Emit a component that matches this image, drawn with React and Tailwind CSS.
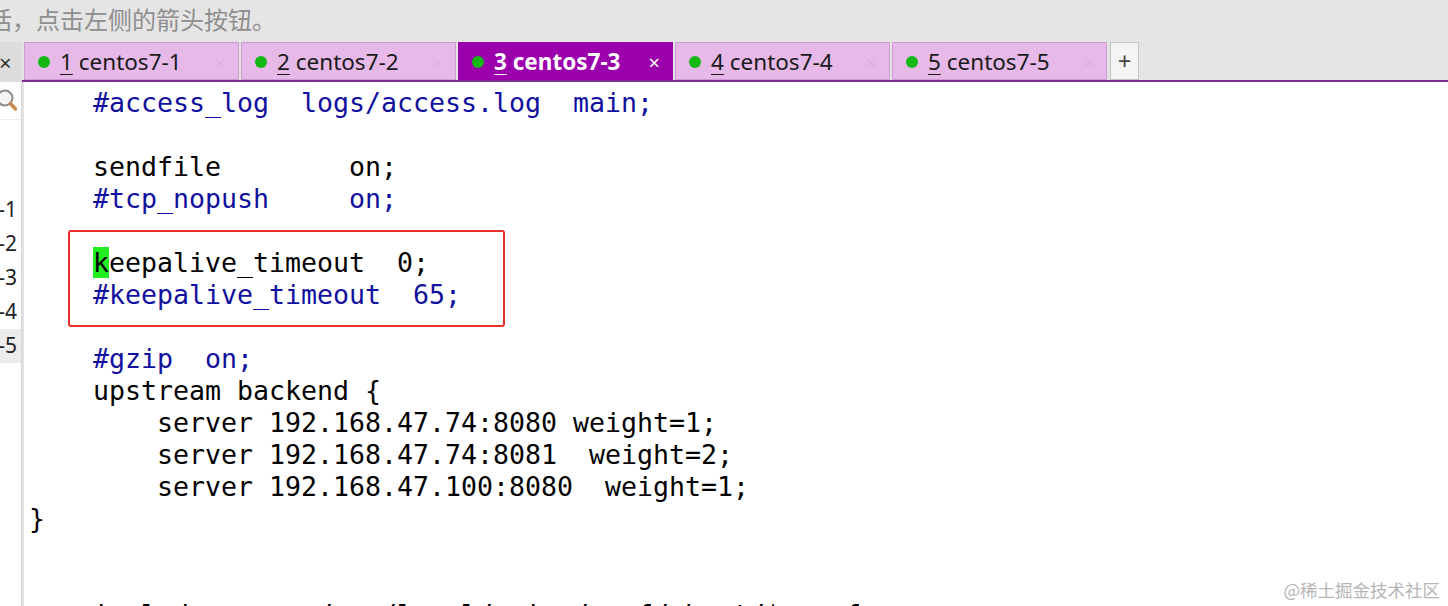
import React from 'react';

const tabs = [
  { n: '1', name: 'centos7-1' },
  { n: '2', name: 'centos7-2' },
  { n: '3', name: 'centos7-3', active: true },
  { n: '4', name: 'centos7-4' },
  { n: '5', name: 'centos7-5' },
];

const B = 'text-[#10109e]';
const K = 'text-black';

// each line: list of [text, colorClass, cursor]
const lines = [
  [['    #access_log  logs/access.log  main;', B]],
  [],
  [['    sendfile        on;', K]],
  [['    #tcp_nopush     on;', B]],
  [],
  [['    ', K], ['k', K, true], ['eepalive_timeout  0;', K]],
  [['    #keepalive_timeout  65;', B]],
  [],
  [['    #gzip  on;', B]],
  [['    upstream backend {', K]],
  [['        server 192.168.47.74:8080 weight=1;', K]],
  [['        server 192.168.47.74:8081  weight=2;', K]],
  [['        server 192.168.47.100:8080  weight=1;', K]],
  [['}', K]],
  [],
  [],
  [['    include       /usr/local/nginx/conf/vhost/*.conf;', K]],
];

const Tab = ({ n, name, active }) => (
  <div
    className={`w-[215px] h-[38px] flex items-center pl-[13px] pr-[12px] pt-[3px] border ${
      active ? 'bg-[#9c00ad] border-[#9c00ad] text-white font-bold' : 'bg-[#e6b9e8] border-[#cf9ad3] text-[#1a1a1a]'
    }`}
  >
    <span className="w-[12px] h-[12px] rounded-full bg-[#14b814] shrink-0 mt-[-2px]" />
    <span className="ml-[10px] text-[22.5px] leading-none whitespace-nowrap">
      <span className="underline underline-offset-[4px] decoration-1">{n}</span> {name}
    </span>
    <span className={`ml-auto font-normal text-[20px] leading-none ${active ? 'text-white' : 'text-[#dcb2de]'}`}>×</span>
  </div>
);

const SideItem = ({ name, selected }) => (
  <div className={`h-[34px] flex items-center justify-end overflow-hidden pr-[4px] ${selected ? 'bg-[#ececec]' : ''}`}>
    <span className="whitespace-nowrap text-[21px] text-[#222]">{name}</span>
  </div>
);

export default function App() {
  return (
    <div
      className="w-[1448px] h-[606px] overflow-hidden bg-white flex flex-col relative"
      style={{ fontFamily: '"Noto Sans", "Noto Sans CJK SC", sans-serif' }}
    >
      {/* hint bar */}
      <div className="h-[42px] bg-[#e5e5e5] flex items-center overflow-hidden shrink-0">
        <span
          className="ml-[-12px] mt-[-4px] text-[24px] leading-none text-[#8e8e8e] whitespace-nowrap"
          style={{ fontFamily: '"Noto Sans CJK SC", sans-serif' }}
        >
          话，点击左侧的箭头按钮。
        </span>
      </div>

      <div className="flex flex-1 min-h-0">
        {/* session list, mostly hidden */}
        <div className="w-[22px] shrink-0 flex flex-col">
          <div className="h-[40px] bg-[#dcdcdc] flex items-center overflow-hidden">
            <span className="ml-[-1px] text-[22px] leading-none text-[#333]">×</span>
          </div>
          <div className="flex-1 border-r border-[#d6d6d6] flex flex-col">
            <div className="h-[38px] flex items-center overflow-hidden border-b border-[#ededed]">
              <svg width="22" height="26" viewBox="0 0 22 26" className="ml-[-5px]">
                <circle cx="10" cy="10" r="7.5" fill="#f4f4f4" stroke="#8a8a8a" strokeWidth="2" />
                <line x1="15.5" y1="15.5" x2="20.5" y2="21" stroke="#c98a4a" strokeWidth="3.5" strokeLinecap="round" />
              </svg>
            </div>
            <div className="h-[73px]" />
            {['centos7-1', 'centos7-2', 'centos7-3', 'centos7-4', 'centos7-5'].map((s, i) => (
              <SideItem key={s} name={s} selected={i === 4} />
            ))}
          </div>
        </div>

        <div className="flex-1 flex flex-col min-w-0">
          {/* tab strip */}
          <div className="h-[40px] bg-[#e4e4e4] border-b-2 border-[#7d2a8e] flex items-start gap-[2px] pl-[2px] shrink-0">
            {tabs.map((t) => (
              <Tab key={t.n} {...t} />
            ))}
            <div className="w-[29px] h-[38px] ml-[1px] bg-[#f4f4f4] border border-[#c4c4c4] flex items-center justify-center">
              <span className="text-[24px] leading-none text-[#444]">+</span>
            </div>
          </div>

          {/* terminal */}
          <div className="flex-1 relative border-l-2 border-[#e2e2e2] pt-[5px] pl-[5px]">
            <div
              className="text-[26.58px] leading-[32px] whitespace-pre"
              style={{ fontFamily: '"DejaVu Sans Mono", monospace' }}
            >
              {lines.map((segs, i) => (
                <div key={i} className="h-[32px]">
                  {segs.map(([t, c, hl], j) => (
                    <span key={j} className={`${c} ${hl ? 'bg-[#22ee22]' : ''}`}>{t}</span>
                  ))}
                </div>
              ))}
            </div>

            {/* annotation box */}
            <div className="absolute left-[44px] top-[148px] w-[437px] h-[97px] border-2 border-[#e8302a] rounded-[3px]" />
          </div>
        </div>
      </div>

      <div
        className="absolute right-[8px] bottom-[8px] text-[17.5px] leading-none text-[#b5b5b5]"
        style={{ fontFamily: '"Noto Sans CJK SC", sans-serif' }}
      >
        @稀土掘金技术社区
      </div>
    </div>
  );
}
